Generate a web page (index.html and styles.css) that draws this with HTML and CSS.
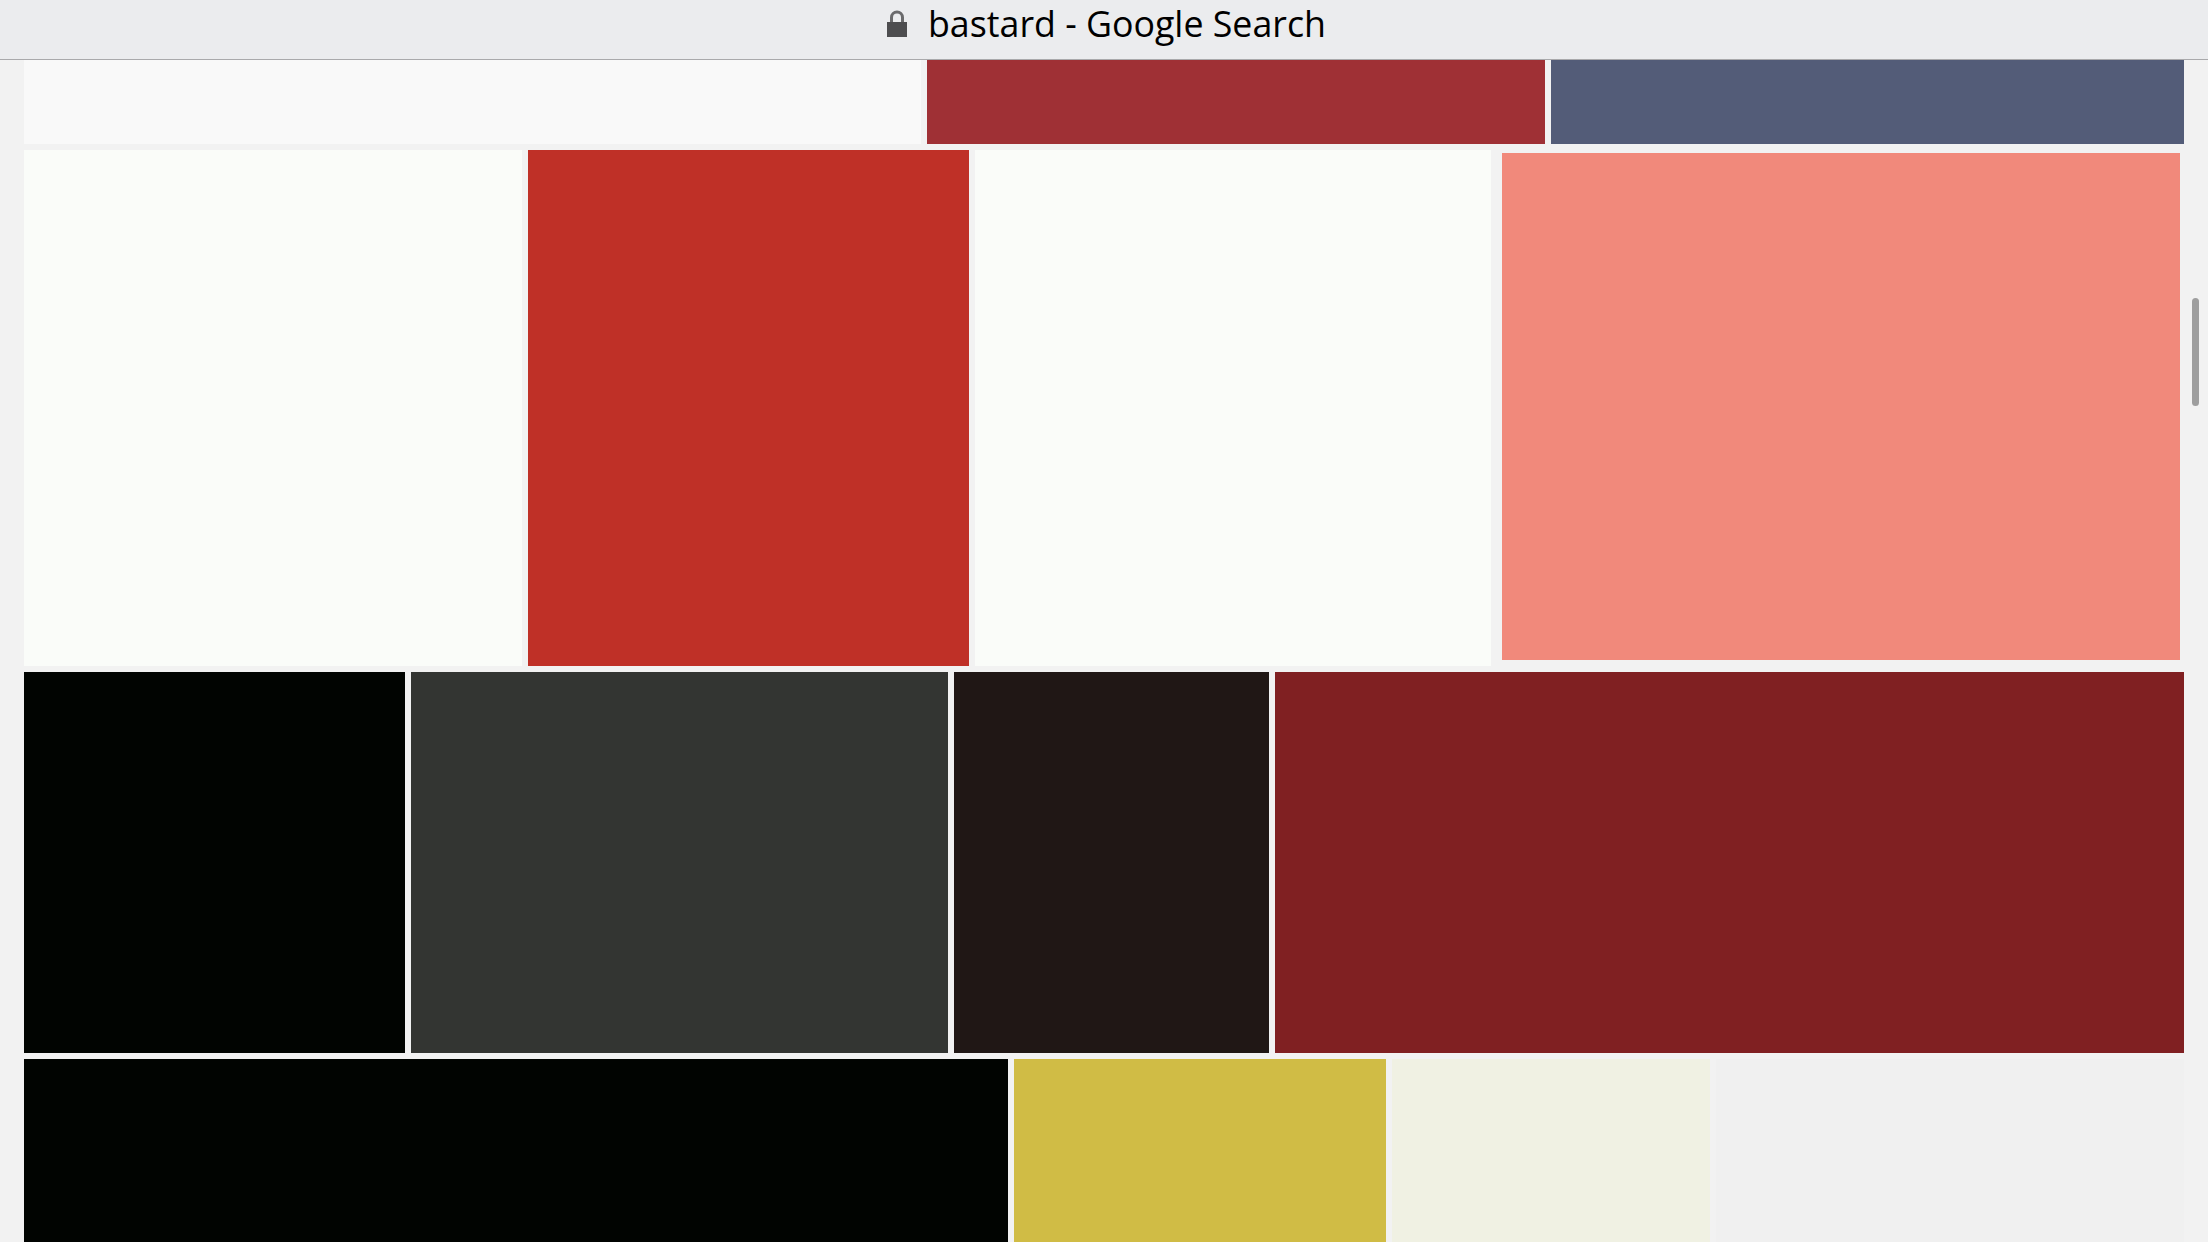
FILE: index.html
```html
<!DOCTYPE html>
<html lang="en">
<head>
    <meta charset="UTF-8">
    <title>bastard - Google Search</title>
    <link rel="stylesheet" href="styles.css">
</head>
<body>
    <div class="title-bar">
        <svg class="lock" viewBox="0 0 20 27" width="20" height="27">
            <path d="M3 12V7.5a7 7 0 0 1 14 0V12h-3V7.5a4 4 0 0 0-8 0V12z" fill="#6a6a6c"/>
            <rect x="0" y="12" width="20" height="15" fill="#4d4d4f"/>
        </svg>
        <span class="title">bastard - Google Search</span>
    </div>

    <div class="results">
        <div class="row row-1">
            <div class="tile w-897 off-white"></div>
            <div class="tile w-618 brick"></div>
            <div class="tile w-633 slate"></div>
        </div>
        <div class="row row-2">
            <div class="tile w-498 near-white"></div>
            <div class="tile w-441 red"></div>
            <div class="tile w-516 near-white"></div>
            <div class="tile w-687 inset">
                <div class="inset-fill salmon"></div>
            </div>
        </div>
        <div class="row row-3">
            <div class="tile w-381 black"></div>
            <div class="tile w-537 charcoal"></div>
            <div class="tile w-315 espresso"></div>
            <div class="tile w-909 maroon"></div>
        </div>
        <div class="row row-4">
            <div class="tile w-984 black"></div>
            <div class="tile w-372 mustard"></div>
            <div class="tile w-318 cream"></div>
            <div class="tile w-468 pale-grey"></div>
        </div>
    </div>

    <div class="scroll-thumb"></div>
</body>
</html>
```

FILE: styles.css
```css
html, body {
    height: 100%;
}

body {
    margin: 0;
    overflow: hidden;
    background-color: #f2f2f2;
    font-family: "Open Sans", sans-serif;
}

.title-bar {
    display: flex;
    align-items: center;
    height: 47px;
    padding: 0 0 12px 887px;
    gap: 21px;
    background-color: #ebecee;
    border-bottom: 1px solid #a9a9ab;
}

.lock {
    flex: none;
}

.title {
    font-size: 35.75px;
    line-height: 47px;
    color: #000;
}

.results {
    display: flex;
    flex-direction: column;
    gap: 6px;
    padding-left: 24px;
}

.row {
    display: flex;
    gap: 6px;
}

.row-1 { height: 84px; }
.row-2 { height: 516px; }
.row-3 { height: 381px; }
.row-4 { height: 240px; }

.tile {
    flex: none;
    height: 100%;
}

.w-315 { width: 315px; }
.w-318 { width: 318px; }
.w-372 { width: 372px; }
.w-381 { width: 381px; }
.w-441 { width: 441px; }
.w-468 { width: 468px; }
.w-498 { width: 498px; }
.w-516 { width: 516px; }
.w-537 { width: 537px; }
.w-618 { width: 618px; }
.w-633 { width: 633px; }
.w-687 { width: 687px; }
.w-897 { width: 897px; }
.w-909 { width: 909px; }
.w-984 { width: 984px; }

.inset {
    box-sizing: border-box;
    padding: 3px 4px 6px 5px;
}

.inset-fill {
    height: 100%;
}

.off-white { background-color: #f9f9f9; }
.near-white { background-color: #fafcf9; }
.brick { background-color: #9f3035; }
.slate { background-color: #535c78; }
.red { background-color: #bf3027; }
.salmon { background-color: #f1897b; }
.black { background-color: #010401; }
.charcoal { background-color: #333532; }
.espresso { background-color: #201715; }
.maroon { background-color: #802022; }
.mustard { background-color: #d0bc45; }
.cream { background-color: #f0f1e3; }
.pale-grey { background-color: #f0f0f0; }

.scroll-thumb {
    position: absolute;
    top: 298px;
    left: 2192px;
    width: 7px;
    height: 108px;
    border-radius: 4px;
    background-color: #9e9e9e;
}
```
